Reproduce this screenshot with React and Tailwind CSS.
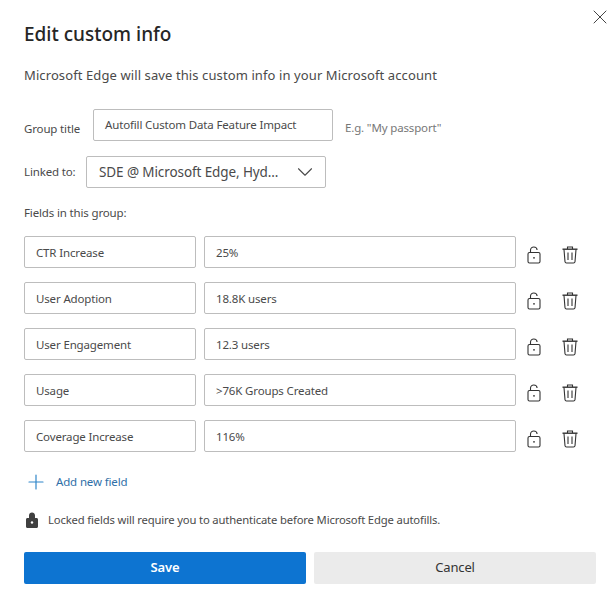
import React from "react";
import { X, Plus, ChevronDown } from "lucide-react";

const fields = [
  { name: "CTR Increase", value: "25%" },
  { name: "User Adoption", value: "18.8K users" },
  { name: "User Engagement", value: "12.3 users" },
  { name: "Usage", value: ">76K Groups Created" },
  { name: "Coverage Increase", value: "116%" },
];

function UnlockIcon() {
  return (
    <svg width="14" height="18" viewBox="0 0 14 18" fill="none" stroke="#333" strokeWidth="1.1">
      <path d="M3.500 6.500V4.200C3.500 2.500 5 1 6.800 1s3.200 1.300 3.300 3" />
      <rect x="1" y="6.500" width="12" height="10.500" rx="1.500" />
      <circle cx="7" cy="11.800" r="0.900" fill="#333" stroke="none" />
    </svg>
  );
}

function TrashIcon() {
  return (
    <svg width="16" height="18" viewBox="0 0 16 18" fill="none" stroke="#333" strokeWidth="1.1">
      <path d="M5.500 3V1h5v2" />
      <path d="M0.500 3.200h15" strokeWidth="1.400" />
      <path d="M2 3.500l1 12.200c.1.800.7 1.300 1.500 1.300h7c.8 0 1.400-.5 1.500-1.300L14 3.500" />
      <path d="M6 6.500v7.500M10 6.500v7.500" />
    </svg>
  );
}

function LockIcon() {
  return (
    <svg width="12" height="17" viewBox="0 0 12 17">
      <path
        d="M3 6V3.500C3 1.800 4.300.5 6 .5S9 1.800 9 3.500V6h1.500c.9 0 1.500.6 1.500 1.500v7c0 .9-.6 1.500-1.500 1.500h-9C.6 16 0 15.400 0 14.500v-7C0 6.600.6 6 1.500 6z"
        fill="#404040"
      />
      <circle cx="6" cy="10.500" r="1.200" fill="#fff" />
    </svg>
  );
}

function App() {
  return (
    <div className="relative w-[616px] h-[606px] bg-white pl-6 pr-5 text-[#4a4a4a] tracking-[-0.15px] font-['Noto_Sans','Open_Sans',sans-serif]">
      <button className="absolute top-[5px] right-[4px] text-[#444]">
        <X size={24} strokeWidth={1} />
      </button>

      <h1 className="pt-[20px] text-[19px] leading-[28px] font-medium text-[#262626] tracking-normal">
        Edit custom info
      </h1>
      <p className="mt-[18px] text-[13px] leading-[18px] tracking-[0.1px]">
        Microsoft Edge will save this custom info in your Microsoft account
      </p>

      <div className="mt-[25px] flex items-center h-[32px]">
        <label className="w-[69px] text-[11.500px] pt-[8px]">Group title</label>
        <div className="flex items-center w-[240px] h-[32px] border border-[#bdbdbd] rounded-[2px] pl-[11px] text-[11.500px]">
          Autofill Custom Data Feature Impact
        </div>
        <span className="ml-[12px] text-[11.500px] text-[#777] pt-[6px]">E.g. "My passport"</span>
      </div>

      <div className="mt-[15px] flex items-center h-[32px]">
        <label className="w-[62px] text-[11.500px]">Linked to:</label>
        <div className="flex items-center justify-between w-[240px] h-[32px] border border-[#bdbdbd] rounded-[2px] pl-[12px] pr-[7px] text-[13.500px]">
          <span className="tracking-[-0.1px]">SDE @ Microsoft Edge, Hyd...</span>
          <ChevronDown size={26} strokeWidth={1} />
        </div>
      </div>

      <p className="mt-[16px] text-[11.500px] leading-[18px]">Fields in this group:</p>

      <div className="mt-[14px] flex flex-col gap-[14px]">
        {fields.map((f) => (
          <div key={f.name} className="flex items-center h-[32px]">
            <div className="flex items-center w-[172px] h-[32px] border border-[#bdbdbd] rounded-[2px] pl-[11px] pt-[2px] text-[11.500px]">
              {f.name}
            </div>
            <div className="flex items-center ml-[8px] w-[312px] h-[32px] border border-[#bdbdbd] rounded-[2px] pl-[11px] pt-[2px] text-[11.500px]">
              {f.value}
            </div>
            <span className="ml-[11px] mt-[6px] flex"><UnlockIcon /></span>
            <span className="ml-[21px] mt-[6px] flex"><TrashIcon /></span>
          </div>
        ))}
      </div>

      <div className="mt-[21px] flex items-center h-[18px] text-[#2f6fa8] text-[11.500px]">
        <Plus size={24} strokeWidth={1.2} className="text-[#2f86c9]" />
        <span className="ml-[8px]">Add new field</span>
      </div>

      <div className="mt-[20px] flex items-center h-[18px] text-[11.250px] tracking-[-0.15px]">
        <span className="ml-[2px] flex"><LockIcon /></span>
        <span className="ml-[10px]">Locked fields will require you to authenticate before Microsoft Edge autofills.</span>
      </div>

      <div className="mt-[23px] flex gap-[8px]">
        <button className="flex-1 h-[32px] bg-[#0d74d1] rounded-[2px] text-white text-[13px] font-semibold">Save</button>
        <button className="flex-1 h-[32px] bg-[#ebebeb] rounded-[2px] text-[#333] text-[13px]">Cancel</button>
      </div>
    </div>
  );
}

export default App;
